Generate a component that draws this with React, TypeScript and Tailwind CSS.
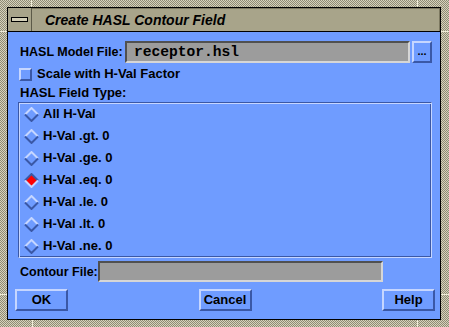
import React from "react";

const label = "font-['Liberation_Sans',Arial,sans-serif] font-bold leading-[16px] text-black whitespace-nowrap";
const raised = "border-2 border-t-[#c6d6ff] border-l-[#c6d6ff] border-r-[#3a58a6] border-b-[#3a58a6]";
const sunken = "border-2 border-t-[#505050] border-l-[#505050] border-r-[#d6d6d6] border-b-[#d6d6d6] bg-[#9c9c9c]";

function Diamond({ on }: { on?: boolean }) {
  const top = on ? "#3a58a6" : "#c6d6ff";
  const bot = on ? "#c6d6ff" : "#3a58a6";
  return (
    <svg width="15" height="15" viewBox="0 0 15 15">
      <polygon points="7.5,1 14,7.5 7.5,14 1,7.5" fill={on ? "#ff0000" : "#6f9cff"} />
      <polyline points="1,7.5 7.5,1 14,7.5" stroke={top} strokeWidth="2" fill="none" />
      <polyline points="1,7.5 7.5,14 14,7.5" stroke={bot} strokeWidth="2" fill="none" />
    </svg>
  );
}

const types = [
  "All H-Val",
  "H-Val .gt. 0",
  "H-Val .ge. 0",
  "H-Val .eq. 0",
  "H-Val .le. 0",
  "H-Val .lt. 0",
  "H-Val .ne. 0",
];

export default function App() {
  return (
    <div className="relative w-[449px] h-[327px] pt-[7px] pl-[7px] pr-[8px] pb-[7px] bg-[repeating-conic-gradient(#d6d2bc_0_25%,#8e8a74_0_50%)] bg-[length:2px_2px]">
      {/* resize corner marks */}
      <div className="absolute left-[31px] top-0 w-[1px] h-[7px] bg-[#f0ecd8]" />
      <div className="absolute left-[417px] top-0 w-[1px] h-[7px] bg-[#f0ecd8]" />
      <div className="absolute left-0 top-[31px] w-[7px] h-[1px] bg-[#f0ecd8]" />
      <div className="absolute right-0 top-[31px] w-[8px] h-[1px] bg-[#f0ecd8]" />
      <div className="absolute left-[32px] bottom-0 w-[1px] h-[7px] bg-[#f0ecd8]" />
      <div className="absolute left-[417px] bottom-0 w-[1px] h-[7px] bg-[#f0ecd8]" />
      <div className="absolute left-0 top-[294px] w-[7px] h-[1px] bg-[#f0ecd8]" />
      <div className="absolute right-0 top-[294px] w-[8px] h-[1px] bg-[#f0ecd8]" />

      <div className="flex flex-col w-full h-full border border-black">
        {/* Title bar */}
        <div className="flex h-[24px] bg-[#a8a48a] border-b border-black shrink-0">
          <div className="flex items-center justify-center w-[24px] border-r border-[#5c5a48]">
            <div className="w-[17px] h-[5px] border border-black bg-[#d4d0b8]" />
          </div>
          <div className="flex-1 flex items-center pl-[13px] border-t border-r border-[#7c7860] font-['Liberation_Sans',Arial,sans-serif] font-bold italic text-[14px] text-black">
            Create HASL Contour Field
          </div>
        </div>

        {/* Dialog body */}
        <div className="flex-1 flex flex-col bg-[#6f9cff] pt-[9px]">
          <div className="flex items-center h-[22px] pl-[12px] pr-[8px]">
            <span className={`${label} text-[12.5px]`}>HASL Model File:</span>
            <div className={`ml-auto shrink-0 w-[285px] h-[22px] flex items-center pl-[7px] ${sunken}`}>
              <span className="font-['Liberation_Mono','Courier_New',monospace] font-bold text-[14.6px] leading-none text-black">receptor.hsl</span>
            </div>
            <div className={`ml-[2px] shrink-0 w-[20px] h-[22px] flex items-center justify-center bg-[#6f9cff] ${raised}`}>
              <span className="font-['Liberation_Sans',sans-serif] font-bold text-[11px] leading-none text-black -mt-[2px]">...</span>
            </div>
          </div>

          <div className="flex items-center h-[16px] mt-[3px] pl-[11px]">
            <div className={`w-[13px] h-[13px] ${raised}`} />
            <span className={`${label} text-[13px] ml-[5px]`}>Scale with H-Val Factor</span>
          </div>

          <div className="flex items-center h-[16px] mt-[3px] pl-[12px]">
            <span className={`${label} text-[13px]`}>HASL Field Type:</span>
          </div>

          <div className="mt-[1px] ml-[10px] mr-[8px] border border-t-[#3a58a6] border-l-[#3a58a6] border-r-[#c6d6ff] border-b-[#c6d6ff] shadow-[inset_1px_1px_0_#c6d6ff,inset_-1px_-1px_0_#3a58a6]">
            {types.map((t) => (
              <div key={t} className="flex items-center h-[22px] pl-[5px]">
                <Diamond on={t === "H-Val .eq. 0"} />
                <span className={`${label} text-[13px] ml-[4px]`}>{t}</span>
              </div>
            ))}
          </div>

          <div className="flex items-center h-[21px] mt-[3px] pl-[12px] pr-[57px]">
            <span className={`${label} text-[12.5px]`}>Contour File:</span>
            <div className={`ml-auto shrink-0 w-[285px] h-[21px] ${sunken}`} />
          </div>

          <div className="flex justify-between mt-[7px] pl-[7px] pr-[5px]">
            {["OK", "Cancel", "Help"].map((b) => (
              <div key={b} className={`w-[53px] h-[22px] flex items-center justify-center ${raised}`}>
                <span className={`${label} text-[13px]`}>{b}</span>
              </div>
            ))}
          </div>
        </div>
      </div>
    </div>
  );
}
